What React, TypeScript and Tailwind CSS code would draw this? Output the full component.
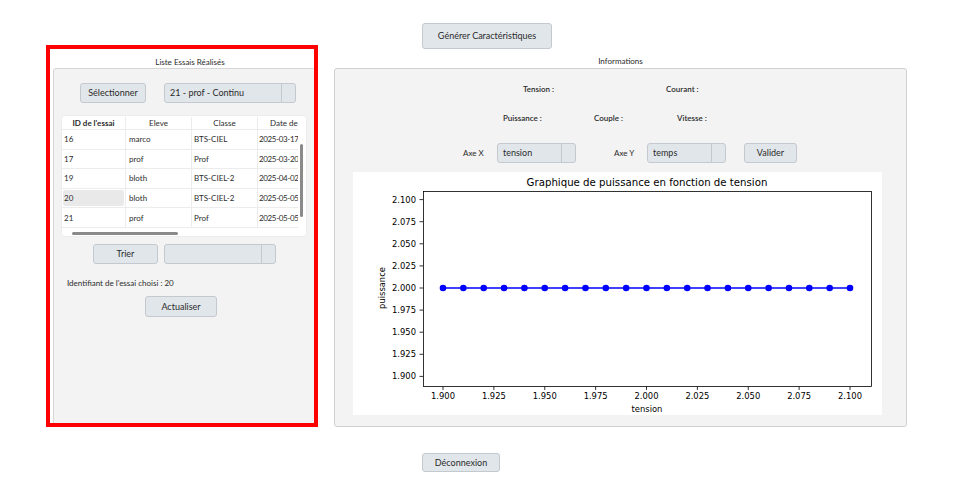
const rows = [
  { id: '16', eleve: 'marco', classe: 'BTS-CIEL', date: '2025-03-17' },
  { id: '17', eleve: 'prof', classe: 'Prof', date: '2025-03-20' },
  { id: '19', eleve: 'bloth', classe: 'BTS-CIEL-2', date: '2025-04-02' },
  { id: '20', eleve: 'bloth', classe: 'BTS-CIEL-2', date: '2025-05-05' },
  { id: '21', eleve: 'prof', classe: 'Prof', date: '2025-05-05' },
];

function Button({ label, className }: { label: string; className: string }) {
  return (
    <div
      className={`flex items-center justify-center rounded-[3px] border border-[#c3c9ce] bg-[#e1e6ea] text-[9px] text-[#2b2b2b] ${className}`}
    >
      {label}
    </div>
  );
}

function Combo({ value, className }: { value: string; className: string }) {
  return (
    <div className={`flex rounded-[3px] border border-[#c3c9ce] bg-[#e1e6ea] text-[9px] text-[#2b2b2b] ${className}`}>
      <div className="flex flex-1 items-center pl-[5px]">{value}</div>
      <div className="w-[14px] border-l border-[#c3c9ce]" />
    </div>
  );
}

function EssaisTable() {
  return (
    <div className="ml-[7px] mt-[12px] flex h-[122px] w-[246px] flex-col overflow-hidden rounded-[3px] border border-[#ececec] bg-white text-[8px] text-[#2b2b2b]">
      <div className="flex h-[112px]">
        <div className="w-[238px] overflow-hidden">
          <div className="flex h-[14px] w-[280px] items-center border-b border-[#ececec]">
            <div className="w-[64px] border-r border-[#ececec] text-center font-bold">ID de l'essai</div>
            <div className="w-[66px] border-r border-[#ececec] text-center">Eleve</div>
            <div className="w-[66px] border-r border-[#ececec] text-center">Classe</div>
            <div className="w-[50px] pl-[12px]">Date de</div>
          </div>
          {rows.map((r) => (
            <div key={r.id} className="flex h-[19.6px] w-[280px] border-b border-[#ececec]">
              <div className="flex w-[64px] items-center border-r border-[#ececec] p-[1px]">
                <div className={`flex h-full w-full items-center rounded-[2px] pl-[1px] ${r.id === '20' ? 'bg-[#e9e9e9]' : ''}`}>
                  {r.id}
                </div>
              </div>
              <div className="flex w-[66px] items-center border-r border-[#ececec] pl-[3px]">{r.eleve}</div>
              <div className="flex w-[66px] items-center border-r border-[#ececec] pl-[2px]">{r.classe}</div>
              <div className="flex w-[60px] items-center pl-[1px] tracking-[-0.35px]">{r.date}</div>
            </div>
          ))}
        </div>
        <div className="w-[8px] pt-[28px]">
          <div className="ml-[2px] h-[73px] w-[3px] rounded-full bg-[#8a8a8a]" />
        </div>
      </div>
      <div className="pl-[10px] pt-[4px]">
        <div className="h-[3px] w-[106px] rounded-full bg-[#8a8a8a]" />
      </div>
    </div>
  );
}

function Chart() {
  const X = (v: number) => 90 + (v - 1.9) * 2035;
  const Y = (v: number) => 116 - (v - 2.0) * 884;
  const xs = Array.from({ length: 21 }, (_, i) => 1.9 + i * 0.01);
  const xTicks = [1.9, 1.925, 1.95, 1.975, 2.0, 2.025, 2.05, 2.075, 2.1];
  const yTicks = [2.1, 2.075, 2.05, 2.025, 2.0, 1.975, 1.95, 1.925, 1.9];
  const font = "'DejaVu Sans', sans-serif";
  return (
    <svg width="529" height="243" className="ml-[18px] mt-[9px] block bg-white">
      <text x="294" y="14" textAnchor="middle" fontSize="10.2" fontFamily={font} fill="#000">
        Graphique de puissance en fonction de tension
      </text>
      <rect x="70.5" y="19.5" width="448" height="195" fill="none" stroke="#000" strokeWidth="0.8" />
      {yTicks.map((t) => (
        <g key={t}>
          <line x1="70" x2="66.5" y1={Y(t)} y2={Y(t)} stroke="#000" strokeWidth="0.8" />
          <text x="63" y={Y(t) + 3} textAnchor="end" fontSize="8.4" fontFamily={font} fill="#000">
            {t.toFixed(3)}
          </text>
        </g>
      ))}
      {xTicks.map((t) => (
        <g key={t}>
          <line x1={X(t)} x2={X(t)} y1="214.5" y2="218" stroke="#000" strokeWidth="0.8" />
          <text x={X(t)} y="227" textAnchor="middle" fontSize="8.4" fontFamily={font} fill="#000">
            {t.toFixed(3)}
          </text>
        </g>
      ))}
      <text x="294" y="239.5" textAnchor="middle" fontSize="8.4" fontFamily={font} fill="#000">
        tension
      </text>
      <text
        x="32"
        y="116"
        textAnchor="middle"
        fontSize="8.4"
        fontFamily={font}
        fill="#000"
        transform="rotate(-90 32 116)"
      >
        puissance
      </text>
      <polyline
        points={xs.map((v) => `${X(v)},${Y(2)}`).join(' ')}
        fill="none"
        stroke="#0000ff"
        strokeWidth="1.5"
      />
      {xs.map((v) => (
        <circle key={v} cx={X(v)} cy={Y(2)} r="3.3" fill="#0000ff" />
      ))}
    </svg>
  );
}

export default function App() {
  return (
    <div className="flex h-[488px] w-[977px] items-start bg-white font-['Lato','Noto_Sans',sans-serif] text-[#2b2b2b]">
      {/* liste des essais */}
      <div className="ml-[46px] mt-[45px] h-[382px] w-[272px] overflow-hidden border-4 border-[#ff0000] bg-white">
        <div className="ml-[3px] w-[274px]">
          <div className="h-[19px] pt-[8px] text-center text-[8px] leading-[11px]">Liste Essais Réalisés</div>
          <div className="h-[380px] rounded-[3px] border border-[#d6d6d6] bg-[#f3f3f3]">
            <div className="ml-[26px] mt-[14px] flex gap-[18px]">
              <Button label="Sélectionner" className="h-[20px] w-[66px]" />
              <Combo value="21 - prof - Continu" className="h-[20px] w-[132px]" />
            </div>
            <EssaisTable />
            <div className="ml-[39px] mt-[7px] flex gap-[6px]">
              <Button label="Trier" className="h-[20px] w-[65px]" />
              <Combo value="" className="h-[20px] w-[112px]" />
            </div>
            <div className="ml-[13px] mt-[14px] text-[8px] leading-[11px]">Identifiant de l'essai choisi : 20</div>
            <Button label="Actualiser" className="ml-[91px] mt-[7px] h-[21px] w-[72px]" />
          </div>
        </div>
      </div>

      {/* informations */}
      <div className="ml-[16px] mt-[23px] flex w-[573px] flex-col">
        <Button label="Générer Caractéristiques" className="ml-[88px] h-[26px] w-[130px]" />
        <div className="h-[19px] pt-[7px] text-center text-[8px] leading-[11px]">Informations</div>
        <div className="h-[359px] rounded-[3px] border border-[#d0d0d0] bg-[#f3f3f3]">
          <div className="mt-[15px] flex pl-[188px] text-[8px] font-semibold leading-[11px]">
            <span className="w-[143px]">Tension :</span>
            <span>Courant :</span>
          </div>
          <div className="mt-[18px] flex pl-[168px] text-[8px] font-semibold leading-[11px]">
            <span className="w-[91px]">Puissance :</span>
            <span className="w-[83px]">Couple :</span>
            <span>Vitesse :</span>
          </div>
          <div className="mt-[19px] flex h-[20px] items-center pl-[128px] text-[8px]">
            <span className="w-[34px]">Axe X</span>
            <Combo value="tension" className="h-[20px] w-[79px]" />
            <span className="ml-[38px] w-[33px]">Axe Y</span>
            <Combo value="temps" className="h-[20px] w-[79px]" />
            <Button label="Valider" className="ml-[18px] h-[20px] w-[53px]" />
          </div>
          <Chart />
        </div>
        <Button label="Déconnexion" className="ml-[88px] mt-[26px] h-[19px] w-[78px]" />
      </div>
    </div>
  );
}
